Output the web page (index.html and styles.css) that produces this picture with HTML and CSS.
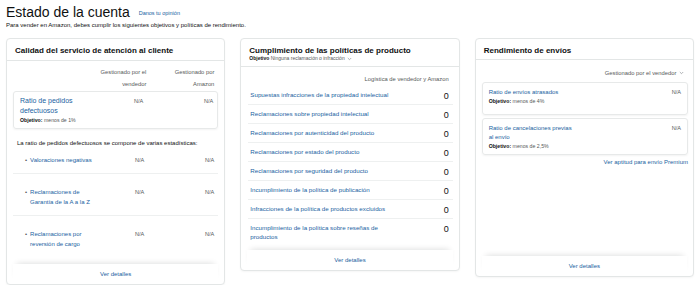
FILE: index.html
```html
<!DOCTYPE html>
<html lang="es">
<head>
    <meta charset="UTF-8">
    <meta name="viewport" content="width=device-width, initial-scale=1.0">
    <title>Estado de la cuenta</title>
    <link rel="stylesheet" href="styles.css">
</head>
<body>
    <div class="page">
        <div class="page-head">
            <h1>Estado de la cuenta <a href="#" class="feedback">Danos tu opinión</a></h1>
            <p class="intro">Para vender en Amazon, debes cumplir los siguientes objetivos y políticas de rendimiento.</p>
        </div>

        <div class="cards">
            <!-- Calidad del servicio -->
            <section class="card">
                <div class="card-head">
                    <h2>Calidad del servicio de atención al cliente</h2>
                </div>
                <div class="card-body quality">
                    <div class="col-heads">
                        <span class="col-a">Gestionado por el vendedor</span>
                        <span class="col-b">Gestionado por Amazon</span>
                    </div>
                    <div class="metric-box odr">
                        <div class="metric-label">
                            <a href="#" class="big-link">Ratio de pedidos defectuosos</a>
                            <div class="target"><b>Objetivo:</b> menos de 1%</div>
                        </div>
                        <span class="val">N/A</span>
                        <span class="val">N/A</span>
                    </div>
                    <p class="note">La ratio de pedidos defectuosos se compone de varias estadísticas:</p>
                    <ul class="stat-list">
                        <li class="stat-row">
                            <div class="stat-label"><span class="dot">•</span><a href="#">Valoraciones negativas</a></div>
                            <span class="val">N/A</span>
                            <span class="val">N/A</span>
                        </li>
                        <li class="stat-row">
                            <div class="stat-label"><span class="dot">•</span><a href="#">Reclamaciones de Garantía de la A a la Z</a></div>
                            <span class="val">N/A</span>
                            <span class="val">N/A</span>
                        </li>
                        <li class="stat-row">
                            <div class="stat-label"><span class="dot">•</span><a href="#">Reclamaciones por reversión de cargo</a></div>
                            <span class="val">N/A</span>
                            <span class="val">N/A</span>
                        </li>
                    </ul>
                </div>
                <div class="card-foot"><a href="#">Ver detalles</a></div>
            </section>

            <!-- Cumplimiento de políticas -->
            <section class="card">
                <div class="card-head">
                    <h2>Cumplimiento de las políticas de producto</h2>
                    <div class="head-sub"><b>Objetivo</b> Ninguna reclamación o infracción
                        <svg class="chev" width="5" height="4" viewBox="0 0 5 4"><polyline points="0.8,1 2.5,2.7 4.2,1" fill="none" stroke="#8d9096" stroke-width="0.7"/></svg>
                    </div>
                </div>
                <div class="card-body policy">
                    <div class="policy-cap">Logística de vendedor y Amazon</div>
                    <ul class="policy-list">
                        <li><a href="#">Supuestas infracciones de la propiedad intelectual</a><span class="count">0</span></li>
                        <li><a href="#">Reclamaciones sobre propiedad intelectual</a><span class="count">0</span></li>
                        <li><a href="#">Reclamaciones por autenticidad del producto</a><span class="count">0</span></li>
                        <li><a href="#">Reclamaciones por estado del producto</a><span class="count">0</span></li>
                        <li><a href="#">Reclamaciones por seguridad del producto</a><span class="count">0</span></li>
                        <li><a href="#">Incumplimiento de la política de publicación</a><span class="count">0</span></li>
                        <li><a href="#">Infracciones de la política de productos excluidos</a><span class="count">0</span></li>
                        <li><a href="#">Incumplimiento de la política sobre reseñas de productos</a><span class="count">0</span></li>
                    </ul>
                </div>
                <div class="card-foot"><a href="#">Ver detalles</a></div>
            </section>

            <!-- Rendimiento de envíos -->
            <section class="card">
                <div class="card-head">
                    <h2>Rendimiento de envíos</h2>
                </div>
                <div class="card-body shipping">
                    <div class="ship-filter">Gestionado por el vendedor
                        <svg class="chev" width="5" height="4" viewBox="0 0 5 4"><polyline points="0.8,1 2.5,2.7 4.2,1" fill="none" stroke="#8d9096" stroke-width="0.7"/></svg>
                    </div>
                    <div class="metric-box ship-box">
                        <div class="metric-label">
                            <a href="#">Ratio de envíos atrasados</a>
                            <div class="target"><b>Objetivo:</b> menos de 4%</div>
                        </div>
                        <span class="val">N/A</span>
                    </div>
                    <div class="metric-box ship-box">
                        <div class="metric-label">
                            <a href="#">Ratio de cancelaciones previas al envío</a>
                            <div class="target"><b>Objetivo:</b> menos de 2,5%</div>
                        </div>
                        <span class="val">N/A</span>
                    </div>
                    <div class="premium"><a href="#">Ver aptitud para envío Premium</a></div>
                </div>
                <div class="card-foot"><a href="#">Ver detalles</a></div>
            </section>
        </div>
    </div>
</body>
</html>
```

FILE: styles.css
```css
* {
    box-sizing: border-box;
}
body {
    margin: 0;
    font-family: "Liberation Sans", Arial, sans-serif;
    color: #0f1111;
    background: #fff;
}
a {
    color: #2162a1;
    text-decoration: none;
}
ul {
    margin: 0;
    padding: 0;
    list-style: none;
}
.page {
    padding: 0 6px;
}
.page-head {
    padding-top: 3px;
    margin-bottom: 9px;
}
h1 {
    margin: 0;
    font-size: 14px;
    font-weight: normal;
    line-height: 18px;
}
.feedback {
    font-size: 5.5px;
    margin-left: 5px;
    vertical-align: 2px;
}
.intro {
    margin: 0;
    font-size: 6px;
    line-height: 7px;
}
.cards {
    display: flex;
    gap: 15px;
    align-items: flex-start;
}
.card {
    flex: 1;
    min-width: 0;
    border: 1px solid #e3e6e6;
    border-radius: 4px;
    background: #fff;
    box-shadow: 0 1px 2px rgba(15, 17, 17, 0.04);
}
.card-head {
    padding: 7px 8px 5px;
    border-bottom: 1px solid #e3e6e6;
}
.card-head h2 {
    margin: 0;
    font-size: 8px;
    font-weight: bold;
    line-height: 9px;
}
.head-sub {
    font-size: 5px;
    line-height: 7px;
    color: #565959;
}
.head-sub b {
    color: #0f1111;
}
.chev {
    vertical-align: middle;
    margin-left: 1px;
}
.card + .card .card-head {
    padding-bottom: 4px;
}
.card-foot {
    margin: 0 6px;
    height: 20px;
    line-height: 20px;
    text-align: center;
    font-size: 6px;
    box-shadow: 0 -4px 6px -4px rgba(15, 17, 17, 0.16);
}
.val {
    font-size: 5.6px;
    line-height: 9px;
    color: #565959;
    text-align: right;
}
.target {
    font-size: 5.2px;
    line-height: 8px;
    color: #565959;
}
.target b {
    color: #0f1111;
}
.metric-box {
    border: 1px solid #e7e9e9;
    border-radius: 3px;
    box-shadow: 0 1px 2px rgba(15, 17, 17, 0.05);
}

/* calidad del servicio */
.quality {
    padding: 5px 6px 7px;
}
.col-heads {
    display: flex;
    justify-content: flex-end;
    gap: 18px;
    padding-right: 4px;
    font-size: 5.8px;
    line-height: 12px;
    color: #565959;
    text-align: right;
}
.col-a {
    width: 60px;
}
.col-b {
    width: 50px;
}
.odr {
    display: grid;
    grid-template-columns: 1fr 40px 60px;
    column-gap: 10px;
    margin-top: 1px;
    padding: 4px 4px 4px 6px;
}
.big-link {
    display: block;
    font-size: 7px;
    line-height: 10px;
}
.odr .val {
    line-height: 10px;
}
.note {
    margin: 10px 0 0 4px;
    font-size: 6px;
    line-height: 8px;
}
.stat-row {
    display: grid;
    grid-template-columns: 1fr 40px 60px;
    column-gap: 10px;
    padding: 13px 4px 8px 12px;
    border-top: 1px solid #eef0f0;
    font-size: 6px;
    line-height: 10px;
}
.stat-row:first-child {
    padding-top: 8px;
    border-top: none;
}
.stat-row .val {
    line-height: 10px;
}
.stat-label {
    display: flex;
    gap: 3px;
}
.dot {
    color: #565959;
}

/* cumplimiento de politicas */
.policy {
    padding: 8px 6px 7px 7px;
}
.policy-cap {
    font-size: 5.8px;
    line-height: 8px;
    color: #565959;
    text-align: right;
    padding-right: 4px;
    margin-bottom: 3px;
}
.policy-list li {
    display: flex;
    justify-content: space-between;
    align-items: flex-start;
    gap: 20px;
    padding: 4px 4px 2px 2px;
    border-bottom: 1px solid #eef0f0;
}
.policy-list li:last-child {
    border-bottom: none;
}
.policy-list a {
    font-size: 6.2px;
    line-height: 9px;
    max-width: 150px;
}
.count {
    font-size: 9px;
    line-height: 11px;
    margin-top: 1px;
}

/* rendimiento de envios */
.shipping {
    min-height: 196px;
    padding: 9px 5px 0 6px;
}
.ship-filter {
    font-size: 5.8px;
    line-height: 8px;
    color: #565959;
    text-align: right;
    padding-right: 4px;
    margin-bottom: 5px;
}
.ship-box {
    display: flex;
    justify-content: space-between;
    min-height: 33px;
    padding: 5px 6px 4px;
    margin-bottom: 3px;
}
.ship-box .metric-label {
    max-width: 88px;
    font-size: 6px;
    line-height: 9px;
}
.premium {
    margin-top: 2px;
    text-align: right;
    font-size: 6px;
    line-height: 8px;
}
```
